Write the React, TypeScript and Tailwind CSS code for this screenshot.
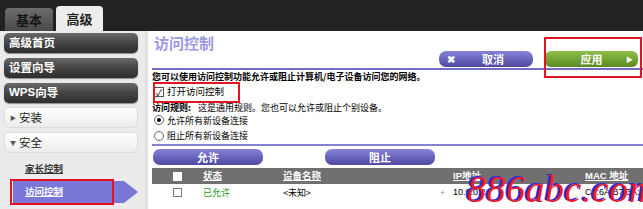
import React from "react";

const cjk = "font-['Noto_Sans_CJK_SC','Noto_Sans',sans-serif]";

function DarkItem({ children }: { children: React.ReactNode }) {
  return (
    <div className="h-[20px] rounded-[5px] bg-gradient-to-b from-[#6a6a6a] via-[#444] to-[#2e2e2e] shadow-[0_1px_1px_rgba(0,0,0,0.4)] flex items-center pl-[5px] text-white font-bold text-[11.5px] leading-none">
      {children}
    </div>
  );
}

function LightItem({ open, children }: { open?: boolean; children: React.ReactNode }) {
  return (
    <div className="h-[21px] rounded-[5px] bg-gradient-to-b from-white to-[#ececec] border border-[#dcdcdc] flex items-center pl-[5px] gap-[3px] text-[#222] text-[11.5px] leading-none">
      <span className="text-[6px] text-[#555]">{open ? "▼" : "▶"}</span>
      {children}
    </div>
  );
}

function PurpleButton({ children, className = "" }: { children: React.ReactNode; className?: string }) {
  return (
    <div
      className={`h-[16px] rounded-[7px] bg-gradient-to-b from-[#8884d8] via-[#6a65bd] to-[#4f4a9e] flex items-center justify-center text-white font-bold text-[11px] leading-none ${className}`}
    >
      {children}
    </div>
  );
}

export default function App() {
  return (
    <div className={`w-[643px] h-[209px] overflow-hidden bg-white relative ${cjk}`}>
      {/* top tabs */}
      <div className="h-[31px] bg-[#212223] flex items-end gap-[3px] pl-[5px]">
        <div className="w-[48px] h-[23px] rounded-t-[4px] bg-gradient-to-b from-[#6c6c6c] to-[#4a4a4a] flex items-center justify-center text-[#151515] font-bold text-[13px] leading-none">
          基本
        </div>
        <div className="w-[47px] h-[25px] rounded-t-[4px] bg-[#ededed] flex items-center justify-center text-[#222] font-bold text-[13px] leading-none">
          高级
        </div>
      </div>

      <div className="flex h-[178px]">
        {/* sidebar */}
        <aside className="w-[148px] shrink-0 bg-[#ebebeb] border-r-[3px] border-[#dedede] pt-[2px] pl-[4px] pr-[7px] flex flex-col">
          <DarkItem>高级首页</DarkItem>
          <div className="h-[5px]" />
          <DarkItem>设置向导</DarkItem>
          <div className="h-[5px]" />
          <DarkItem>
            <span className="font-['Liberation_Sans',sans-serif]">WPS</span>向导
          </DarkItem>
          <div className="h-[4px]" />
          <LightItem>安装</LightItem>
          <div className="h-[4px]" />
          <LightItem open>安全</LightItem>
          <div className="h-[10px] " />
          <div className="pl-[21px] text-[9.5px] font-bold text-[#333] underline leading-none h-[12px] flex items-center">
            家长控制
          </div>
          <div className="h-[6px]" />
          <div className="relative h-[22px] ml-[9px]">
            <div className="h-full flex items-center">
              <div className="h-full w-[113px] bg-[#7b77d9] flex items-center pl-[12px] text-white text-[9.5px] font-bold underline leading-none">
                访问控制
              </div>
              <div className="w-0 h-0 border-y-[11px] border-y-transparent border-l-[14px] border-l-[#7b77d9]" />
            </div>
            <div className="absolute left-[-3px] top-[-2px] w-[104px] h-[26px] border-2 border-[#e3141f]" />
          </div>
        </aside>

        {/* main */}
        <main className="flex-1 min-w-0 overflow-hidden whitespace-nowrap pl-[4px] flex flex-col">
          <div className="h-[39px] shrink-0 border-b-2 border-[#716dcb] flex justify-between relative">
            <div className="pt-[4px] pl-[2px] text-[15px] font-bold text-[#9b99e2] leading-none">访问控制</div>
            <div className="flex items-start gap-[12px] pt-[20px] pr-[5px]">
              <PurpleButton className="w-[94px] justify-start pl-[8px]">
                <span className="text-[10px] mr-[27px]">✖</span>取消
              </PurpleButton>
              <div className="w-[93px] h-[16px] rounded-[6px] bg-gradient-to-b from-[#8fbe4a] via-[#74a433] to-[#5a8a20] flex items-center justify-center relative text-white font-bold text-[11px] leading-none">
                应用
                <span className="absolute right-[5px] text-[7px]">▶</span>
              </div>
            </div>
            <div className="absolute right-[1px] top-[6px] w-[98px] h-[41px] border-2 border-[#e3141f]" />
          </div>

          <div className="h-[12px] shrink-0 flex items-center text-[9px] font-bold text-black leading-none">
            您可以使用访问控制功能允许或阻止计算机/电子设备访问您的网络。
          </div>
          <div className="h-[20px] shrink-0 flex items-center pl-[2px] relative">
            <span className="w-[10px] h-[10px] border border-[#555] bg-white flex items-center justify-center text-[9px] leading-none text-black mr-[3px]">
              ✓
            </span>
            <span className="text-[9.5px] text-black leading-none">打开访问控制</span>
            <div className="absolute left-[1px] top-[0px] w-[87px] h-[21px] border-2 border-[#e3141f]" />
          </div>
          <div className="h-[10px] shrink-0 flex items-center text-[9px] text-black leading-none">
            <span className="font-bold mr-[7px]">访问规则:</span>这是通用规则。您也可以允许或阻止个别设备。
          </div>
          <div className="h-[16px] shrink-0 flex items-center gap-[3px] pl-[2px] text-[9px] text-black leading-none">
            <span className="w-[10px] h-[10px] rounded-full border border-[#666] bg-white flex items-center justify-center">
              <span className="w-[4px] h-[4px] rounded-full bg-black" />
            </span>
            允许所有新设备连接
          </div>
          <div className="h-[15px] shrink-0 flex items-center gap-[3px] pl-[2px] text-[9px] text-black leading-none">
            <span className="w-[10px] h-[10px] rounded-full border border-[#666] bg-white" />
            阻止所有新设备连接
          </div>
          <div className="h-[3px] shrink-0 border-b-2 border-[#8582d2]" />

          <div className="h-[22px] shrink-0 flex items-center gap-[62px] pl-[1px]">
            <PurpleButton className="w-[110px]">允许</PurpleButton>
            <PurpleButton className="w-[110px]">阻止</PurpleButton>
          </div>

          <div className="h-[16px] shrink-0 bg-[#707070] flex items-center text-white text-[9.5px] font-bold leading-none">
            <div className="w-[51px] shrink-0 flex justify-center">
              <span className="w-[9px] h-[9px] bg-white" />
            </div>
            <div className="w-[80px] shrink-0 underline">状态</div>
            <div className="w-[170px] shrink-0 underline">设备名称</div>
            <div className="w-[132px] shrink-0 underline font-['Liberation_Sans','Noto_Sans_CJK_SC',sans-serif]">IP地址</div>
            <div className="underline font-['Liberation_Sans','Noto_Sans_CJK_SC',sans-serif]">MAC 地址</div>
          </div>
          <div className="h-[16px] shrink-0 flex items-center text-[9px] leading-none">
            <div className="w-[51px] shrink-0 flex justify-center">
              <span className="w-[9px] h-[9px] border border-[#777] bg-white" />
            </div>
            <div className="w-[80px] shrink-0 text-[#2b9a2b]">已允许</div>
            <div className="w-[157px] shrink-0 text-black">&lt;未知&gt;</div>
            <div className="w-[13px] shrink-0 text-[#999]">+</div>
            <div className="w-[132px] shrink-0 text-black font-['Liberation_Sans',sans-serif]">10.0.0.2</div>
            <div className="text-black font-['Liberation_Sans',sans-serif]">C4:6A:B7:3A:72:2</div>
          </div>
        </main>
      </div>

      {/* watermark */}
      <div className="absolute left-[467px] top-[170px] text-[38px] italic leading-none text-[#ec1c2a] font-['Liberation_Serif',serif] tracking-[0.5px] [text-shadow:-2px_-1px_0_#2a2ae6]">
        886abc.com
      </div>
    </div>
  );
}
